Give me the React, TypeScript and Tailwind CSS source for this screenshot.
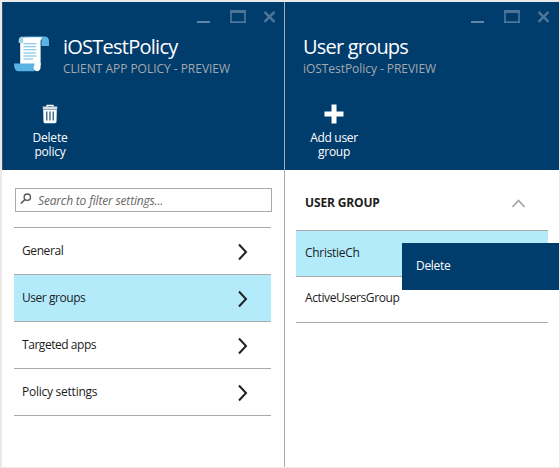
import React from "react";

function WindowControls({ className }: { className: string }) {
  return (
    <div className={`flex h-[31px] shrink-0 justify-end ${className}`}>
      <svg width="80" height="22" viewBox="0 0 80 22" className="mt-[7px]" fill="none" stroke="#4c7599">
        <path d="M0 13h13" strokeWidth="2" stroke="#5f86a6" />
        <path d="M33 2.500h16" strokeWidth="3" />
        <path d="M34 3v11M48 3v11M33 13.200h16" strokeWidth="1.700" />
        <path d="M67.500 2.800l10 10M77.500 2.800l-10 10" strokeWidth="2.600" />
      </svg>
    </div>
  );
}

function PolicyIcon() {
  return (
    <svg width="36" height="36" viewBox="0 0 36 36" className="mt-[3px]">
      <path d="M8 .6h22.500c3 0 4.500 2 4.500 4.500V10h-7.500V4z" fill="#59b4e3" />
      <path d="M8.500 1.200h20c-1.400 1-1.900 2.400-1.900 4.500V29H6.200V4c0-1.800.9-2.800 2.300-2.800z" fill="#fff" />
      <path d="M8.500.6C5.800.6 4.700 2.600 4.700 4.800V7h4.500V4c0-1-.2-2-.7-2.500z" fill="#9bd5f0" />
      <path d="M0 27.500h20.500v7.700H4.200C1.600 35.200 0 32.500 0 27.500z" fill="#59b4e3" />
      <path d="M26.600 27v4c0 2.500-1.500 4.200-3.500 4.200s-3.500-1.600-3.500-3.800c0-1.700 1-2.800 2.500-3.200z" fill="#fff" />
      <path d="M9.500 7.800H22.500M9.500 10.800H22M9.500 13.800H22.500M9.500 17H22M9.500 20H22.500M9.500 23H19" stroke="#68bae4" strokeWidth="1.100" />
    </svg>
  );
}

function TrashIcon() {
  return (
    <svg width="16" height="20" viewBox="0 0 16 20">
      <path d="M5 3V1.300h6V3" fill="none" stroke="#fff" strokeWidth="1.200" />
      <path d="M.8 2.500h14.400v3H.8z" fill="#d5dfe8" />
      <path d="M1.200 5.800h13.600l-.3 12c0 .9-.6 1.400-1.600 1.400H3.100c-1 0-1.600-.5-1.600-1.400z" fill="#fff" />
      <path d="M4.800 7.500v9M8 7.500v9M11.200 7.500v9" stroke="#1a507b" strokeWidth="1.200" />
    </svg>
  );
}

function PlusIcon() {
  return (
    <svg width="20" height="20" viewBox="0 0 20 20">
      <path d="M10 .5v19M.5 10h19" stroke="#fff" strokeWidth="5" />
    </svg>
  );
}

function SettingRow({ label, selected, tracking }: { label: string; selected?: boolean; tracking: string }) {
  return (
    <li className={`flex h-[47px] items-center justify-between border-b border-[#a9a9a9] pl-2 pr-[23px] ${selected ? "bg-[#b3ebfb]" : ""}`}>
      <span className={`-mt-px ${tracking}`}>{label}</span>
      <svg width="10" height="18" viewBox="0 0 10 18" className="mt-px" fill="none" stroke="#222" strokeWidth="2">
        <path d="M1 1.500L8 9l-7 7.500" />
      </svg>
    </li>
  );
}

export default function App() {
  return (
    <main className="relative flex h-[468px] w-[560px] overflow-hidden border-b border-l-2 border-r border-t-2 border-[#eaeaea] bg-white font-['Open_Sans','Noto_Sans',sans-serif] text-[12px] leading-[16px] text-[#1c1c1c]">
      <section className="flex w-[283px] shrink-0 flex-col border-r border-[#a9a9a9]">
        <header className="h-[168px] border-l border-[#34546f] bg-[#003c6c] text-white">
          <WindowControls className="pr-[7px]" />
          <div className="flex h-[66px] pl-[11px]">
            <PolicyIcon />
            <div className="ml-[13px] whitespace-nowrap">
              <h1 className="mt-px text-[20px] leading-[26px] tracking-[-0.75px]">iOSTestPolicy</h1>
              <p className="mt-px tracking-[-0.03px] text-[#a5a9ad]">CLIENT APP POLICY - PREVIEW</p>
            </div>
          </div>
          <button className="ml-[22px] mt-[5px] flex w-[50px] flex-col items-center">
            <TrashIcon />
            <span className="mt-[7px] leading-[14px] tracking-[-0.2px]">Delete<br />policy</span>
          </button>
        </header>
        <div className="px-[13px] pl-3 pt-[18px]">
          <label className="ml-px flex h-6 w-[257px] items-center border border-[#a9a9a9] pl-[4px]">
            <svg width="12" height="12" viewBox="0 0 12 12" fill="none" stroke="#555" strokeWidth="1.300" className="-mt-[2px]">
              <circle cx="7.300" cy="4.200" r="3.200" />
              <path d="M5 6.500L.8 10.500" strokeWidth="1.600" />
            </svg>
            <span className="mt-px ml-[6px] italic tracking-[-0.17px] text-[#666]">Search to filter settings...</span>
          </label>
          <ul className="mt-[15px] w-[257px] border-t border-[#a9a9a9]">
            <SettingRow label="General" tracking="tracking-[-0.4px]" />
            <SettingRow label="User groups" selected tracking="tracking-[-0.45px]" />
            <SettingRow label="Targeted apps" tracking="tracking-[-0.45px]" />
            <SettingRow label="Policy settings" tracking="tracking-[-0.25px]" />
          </ul>
        </div>
      </section>
      <section className="flex min-w-0 flex-1 flex-col">
        <header className="h-[168px] bg-[#003c6c] text-white">
          <WindowControls className="pr-2" />
          <div className="h-[66px] pl-[18px]">
            <h2 className="pt-px text-[20px] leading-[26px] tracking-[-0.8px]">User groups</h2>
            <p className="mt-px tracking-[-0.05px] text-[#a5a9ad]">iOSTestPolicy - PREVIEW</p>
          </div>
          <button className="ml-[19px] mt-[5px] flex w-[60px] flex-col items-center">
            <PlusIcon />
            <span className="mt-[7px] leading-[14px] tracking-[-0.3px]">Add user<br />group</span>
          </button>
        </header>
        <div className="ml-[11px] w-[252px]">
          <div className="flex h-[61px] items-center justify-between border-b border-[#a9a9a9] pl-[9px] pr-[23px]">
            <span className="mt-[5px] font-bold tracking-[-0.15px]">USER GROUP</span>
            <svg width="13" height="9" viewBox="0 0 13 9" fill="none" stroke="#a5a5a5" strokeWidth="1.700" className="mt-[7px]">
              <path d="M.5 8L6.500 1.500 12.500 8" />
            </svg>
          </div>
          <div className="flex h-[46px] items-center border-b border-[#a9a9a9] bg-[#b3ebfb] pl-[9px]">
            <span className="-mt-px tracking-[-0.3px]">ChristieCh</span>
          </div>
          <div className="flex h-[46px] items-center border-b border-[#a9a9a9] pl-[9px]">
            <span className="-mt-[3px] tracking-[-0.4px]">ActiveUsersGroup</span>
          </div>
        </div>
      </section>
      <div role="menu" className="absolute left-[400px] top-[241px] flex h-[47px] w-[157px] items-center bg-[#003c6c] pl-[14px] text-white">
        <span className="-mt-[2px] tracking-[-0.3px]">Delete</span>
      </div>
    </main>
  );
}
